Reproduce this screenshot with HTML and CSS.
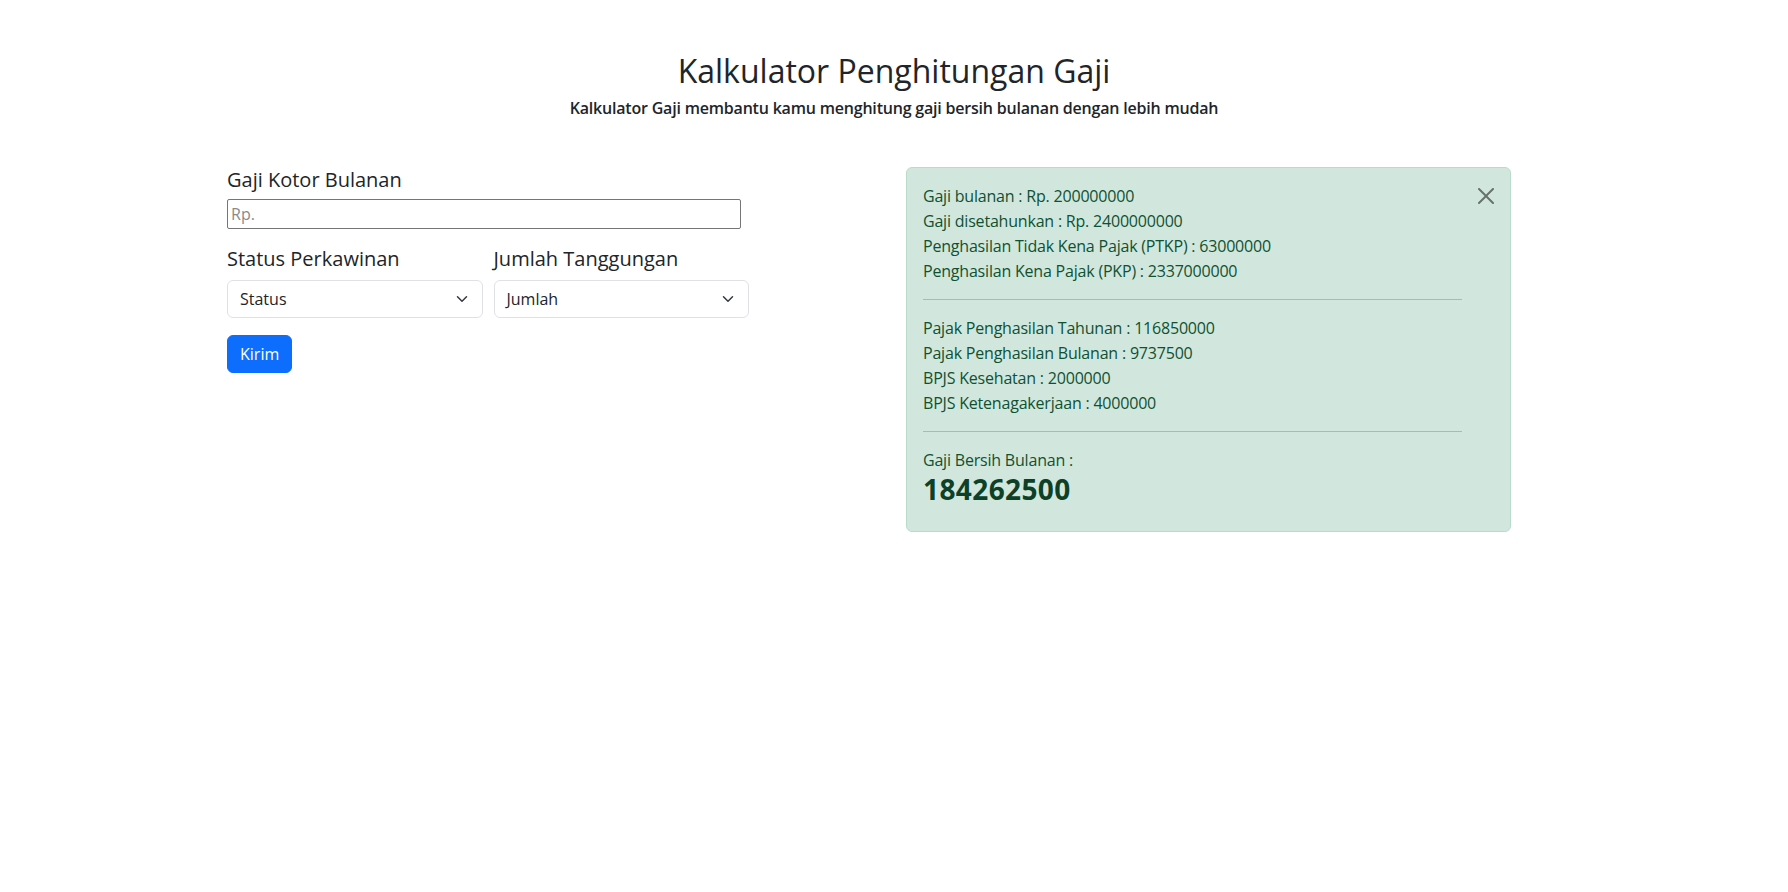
FILE: index.html
```html
<!DOCTYPE html>
<html lang="id">
<head>
<meta charset="utf-8">
<title>Kalkulator Penghitungan Gaji</title>
<link rel="stylesheet" href="styles.css">
</head>
<body>
<header class="hero">
  <h1 class="title">Kalkulator Penghitungan Gaji</h1>
  <p class="subtitle">Kalkulator Gaji membantu kamu menghitung gaji bersih bulanan dengan lebih mudah</p>
</header>
<main class="content">
  <form class="calc-form">
    <label class="field-label" for="gaji">Gaji Kotor Bulanan</label>
    <input class="plain-input" id="gaji" type="text" placeholder="Rp.">
    <div class="field-row">
      <div class="field">
        <label class="field-label field-label--sel" for="status">Status Perkawinan</label>
        <div class="select">
          <span>Status</span>
          <svg class="chev" viewBox="0 0 16 16" width="16" height="12"><path fill="none" stroke="#343a40" stroke-linecap="round" stroke-linejoin="round" stroke-width="2" d="m2 5 6 6 6-6"/></svg>
        </div>
      </div>
      <div class="field">
        <label class="field-label field-label--sel" for="jumlah">Jumlah Tanggungan</label>
        <div class="select">
          <span>Jumlah</span>
          <svg class="chev" viewBox="0 0 16 16" width="16" height="12"><path fill="none" stroke="#343a40" stroke-linecap="round" stroke-linejoin="round" stroke-width="2" d="m2 5 6 6 6-6"/></svg>
        </div>
      </div>
    </div>
    <button class="btn-primary" type="button">Kirim</button>
  </form>
  <aside class="result">
    <button class="close" type="button" aria-label="Close">
      <svg viewBox="0 0 16 16" width="16" height="16"><path fill="#000" d="M.293.293a1 1 0 0 1 1.414 0L8 6.586 14.293.293a1 1 0 1 1 1.414 1.414L9.414 8l6.293 6.293a1 1 0 0 1-1.414 1.414L8 9.414l-6.293 6.293a1 1 0 0 1-1.414-1.414L6.586 8 .293 1.707a1 1 0 0 1 0-1.414z"/></svg>
    </button>
    <div class="lines">
      <div>Gaji bulanan : Rp. 200000000</div>
      <div>Gaji disetahunkan : Rp. 2400000000</div>
      <div>Penghasilan Tidak Kena Pajak (PTKP) : 63000000</div>
      <div>Penghasilan Kena Pajak (PKP) : 2337000000</div>
    </div>
    <hr class="sep">
    <div class="lines">
      <div>Pajak Penghasilan Tahunan : 116850000</div>
      <div>Pajak Penghasilan Bulanan : 9737500</div>
      <div>BPJS Kesehatan : 2000000</div>
      <div>BPJS Ketenagakerjaan : 4000000</div>
    </div>
    <hr class="sep">
    <div class="lines">Gaji Bersih Bulanan :</div>
    <h3 class="net">184262500</h3>
  </aside>
</main>
</body>
</html>
```
FILE: styles.css
```css
* { box-sizing: border-box; }
body {
  margin: 0;
  font-family: "Open Sans", "Noto Sans", sans-serif;
  color: #212529;
  background: #fff;
  font-size: 16px;
  line-height: 1.5;
}
.hero {
  text-align: center;
  padding-top: 52px;
}
.title {
  margin: 0;
  font-size: 32px;
  font-weight: 500;
  line-height: 1.2;
}
.subtitle {
  margin: 0;
  font-size: 16px;
  font-weight: 600;
  letter-spacing: -0.2px;
  line-height: 24px;
  padding-top: 6px;
}
.content {
  display: flex;
  justify-content: space-between;
  align-items: flex-start;
  width: 1284px;
  margin-left: 227px;
  margin-top: 47px;
}
.calc-form {
  width: 522px;
  display: flex;
  flex-direction: column;
  align-items: flex-start;
  padding-top: 1px;
}
.field-label {
  display: block;
  font-size: 20px;
  font-weight: 500;
  line-height: 24px;
  margin-bottom: 7px;
}
.field-label--sel { margin-bottom: 9px; }
.plain-input {
  width: 514px;
  height: 30px;
  border: 1px solid #767676;
  border-radius: 2px;
  padding: 0 3px;
  font: inherit;
  font-size: 16px;
  color: #212529;
  margin: 0 0 18px;
}
.plain-input::placeholder { color: #8a8a8a; }
.field-row {
  display: flex;
  gap: 11px;
  width: 522px;
}
.field { flex: 1; }
.select {
  display: flex;
  align-items: center;
  justify-content: space-between;
  height: 38px;
  border: 1px solid #dee2e6;
  border-radius: 6px;
  padding: 0 12px;
  font-size: 16px;
  color: #212529;
}
.chev { display: block; }
.btn-primary {
  margin-top: 17px;
  background: #0d6efd;
  color: #fff;
  border: 1px solid #0d6efd;
  border-radius: 6px;
  font: inherit;
  font-size: 16px;
  line-height: 24px;
  padding: 6px 12px;
}
.result {
  position: relative;
  width: 605px;
  background: #d1e7dd;
  border: 1px solid #badbcc;
  border-radius: 6px;
  color: #0f5132;
  padding: 16px 48px 16px 16px;
  line-height: 24.75px;
  letter-spacing: -0.2px;
}
.close {
  position: absolute;
  top: 0;
  right: 0;
  background: none;
  border: 0;
  padding: 20px 16px;
  opacity: .5;
  line-height: 0;
}
.sep {
  margin: 16px 0;
  border: 0;
  border-top: 1px solid #0f5132;
  opacity: .25;
}
.net {
  margin: 0 0 8px;
  font-size: 28px;
  font-weight: 700;
  line-height: 1.2;
  letter-spacing: 0.4px;
  color: #0c4128;
}
```
